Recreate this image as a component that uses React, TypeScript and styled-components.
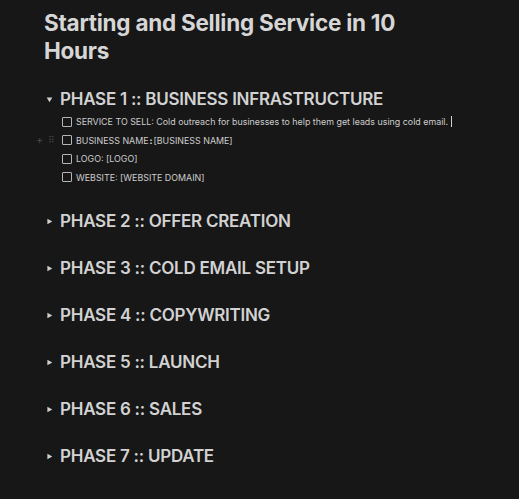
import React from 'react';
import styled, {createGlobalStyle} from 'styled-components';

const GlobalStyle = createGlobalStyle`
    html, body {
        margin: 0;
        padding: 0;
        background: #171717;
    }
    body {
        font-family: Inter, "Noto Sans", sans-serif;
        -webkit-font-smoothing: antialiased;
    }
`;

type Task = {
    text: string,
    hovered?: boolean,
    caret?: boolean,
};

const tasks: Task[] = [
    {text: 'SERVICE TO SELL: Cold outreach for businesses to help them get leads using cold email.', caret: true},
    {text: 'BUSINESS NAME: [BUSINESS NAME]', hovered: true},
    {text: 'LOGO: [LOGO]'},
    {text: 'WEBSITE: [WEBSITE DOMAIN]'},
];

const phases = [
    'PHASE 2 :: OFFER CREATION',
    'PHASE 3 :: COLD EMAIL SETUP',
    'PHASE 4 :: COPYWRITING',
    'PHASE 5 :: LAUNCH',
    'PHASE 6 :: SALES',
    'PHASE 7 :: UPDATE',
];

function Toggle({open}: {open?: boolean}) {
    return (
        <Arrow>
            <svg
                width='7'
                height='7'
                viewBox='0 0 10 10'
                style={open ? {transform: 'rotate(90deg)'} : undefined}
            >
                <path
                    d='M2 1 L9 5 L2 9 Z'
                    fill='#cfcfcf'
                />
            </svg>
        </Arrow>
    );
}

function TaskRow({task}: {task: Task}) {
    const [before, after] = task.hovered ? task.text.split(':') : [task.text, ''];

    return (
        <Row>
            {task.hovered &&
                <Handles>
                    <span>{'+'}</span>
                    <Dots>{'⠿'}</Dots>
                </Handles>
            }
            <Box/>
            <TaskText>
                {task.hovered ? (
                    <>
                        {before}
                        <Beam>{':'}</Beam>
                        {after}
                    </>
                ) : task.text}
                {task.caret && <Caret/>}
            </TaskText>
        </Row>
    );
}

export default function App() {
    return (
        <>
            <GlobalStyle/>
            <Page>
                <Title>{'Starting and Selling Service in 10 Hours'}</Title>
                <Phase>
                    <Toggle open={true}/>
                    <PhaseTitle>{'PHASE 1 :: BUSINESS INFRASTRUCTURE'}</PhaseTitle>
                </Phase>
                <TaskList>
                    {tasks.map((t) => (
                        <TaskRow
                            key={t.text}
                            task={t}
                        />
                    ))}
                </TaskList>
                <Collapsed>
                    {phases.map((p) => (
                        <Phase key={p}>
                            <Toggle/>
                            <PhaseTitle>{p}</PhaseTitle>
                        </Phase>
                    ))}
                </Collapsed>
            </Page>
        </>
    );
}

const Page = styled.div`
    width: 519px;
    height: 499px;
    box-sizing: border-box;
    padding: 9px 20px 0 44px;
    background: #171717;
    overflow: hidden;
`;

const Title = styled.h1`
    margin: 0 0 21px;
    width: 380px;
    font-size: 22.5px;
    line-height: 28px;
    font-weight: 700;
    color: #d6d6d6;
    letter-spacing: -0.25px;
`;

const Phase = styled.div`
    display: flex;
    align-items: center;
    height: 26px;
`;

const Arrow = styled.div`
    display: flex;
    align-items: center;
    justify-content: flex-start;
    width: 16px;
    height: 16px;
    padding-left: 2px;
    box-sizing: border-box;
`;

const PhaseTitle = styled.div`
    font-size: 17px;
    font-weight: 600;
    color: #d2d2d2;
    letter-spacing: -0.25px;
`;

const TaskList = styled.div`
    display: flex;
    flex-direction: column;
    gap: 3px;
    padding: 0 0 0 18px;
    margin-top: 2px;
`;

const Row = styled.div`
    position: relative;
    display: flex;
    align-items: center;
    gap: 4px;
    height: 15.5px;
`;

const Handles = styled.div`
    position: absolute;
    left: -26px;
    top: 0;
    display: flex;
    align-items: center;
    gap: 5px;
    height: 100%;
    color: #4a4a4a;
    font-size: 11px;
`;

const Dots = styled.span`
    font-size: 9px;
    font-family: "DejaVu Sans", sans-serif;
`;

const Box = styled.div`
    width: 8px;
    height: 8px;
    border: 1.2px solid #b5b5b5;
    border-radius: 1px;
    flex-shrink: 0;
`;

const TaskText = styled.div`
    font-size: 8.9px;
    color: #cdcdcd;
    white-space: nowrap;
    display: flex;
    align-items: center;
`;

const Beam = styled.span`
    display: inline-block;
    width: 5px;
    text-align: center;
    color: #e8e8e8;
    font-weight: 700;
`;

const Caret = styled.span`
    display: inline-block;
    width: 1px;
    height: 11px;
    margin-left: 3px;
    background: #cfcfcf;
`;

const Collapsed = styled.div`
    display: flex;
    flex-direction: column;
    gap: 21px;
    margin-top: 23px;
`;
